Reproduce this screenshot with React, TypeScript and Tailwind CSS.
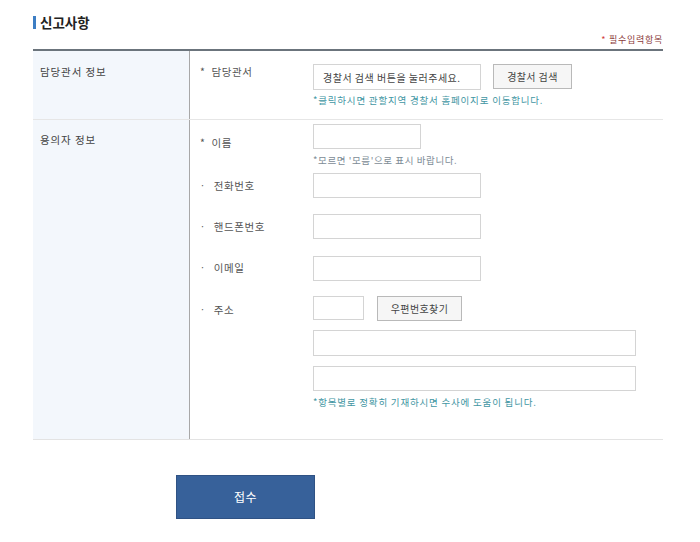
import React from "react";

const FieldLabel = ({ text, star, pt }: { text: string; star?: boolean; pt: string }) => (
  <div className={`w-[113px] shrink-0 text-[10.5px] leading-[14px] tracking-[0.6px] text-[#555] ${pt}`}>
    <span className={star ? "mr-[6px]" : "mr-[8px] text-[9px] relative -top-[1px]"}>{star ? "*" : "·"}</span>
    {text}
  </div>
);

const Input = ({ className }: { className: string }) => (
  <div className={`border border-[#d4d4d4] bg-white ${className}`} />
);

export default function App() {
  return (
    <div className="min-h-screen bg-white pl-[33px] pt-[14px] font-['Noto_Sans_CJK_KR',sans-serif]">
      <div className="w-[630px]">
        {/* Title */}
        <div className="flex items-center gap-[4px] h-[16px]">
          <div className="w-[3px] h-[13px] bg-[#3d7ec4]" />
          <h1 className="text-[13.5px] leading-[16px] font-semibold text-[#222]">신고사항</h1>
        </div>
        <p className="mt-[4px] mb-[3px] text-right text-[9px] leading-[12px] tracking-[0.7px] text-[#8b3a3a]">
          <span className="text-[#d23c3c] mr-[3px]">*</span>필수입력항목
        </p>

        {/* Table */}
        <div className="border-t-2 border-[#6b747c] border-b border-b-[#e3e3e3]">
          {/* Row 1 */}
          <div className="grid grid-cols-[157px_1fr] border-b border-[#e6e6e6]">
            <div className="bg-[#f3f7fc] border-r border-[#a8a8a8] pl-[7px] pt-[14px] text-[10.5px] leading-[14px] tracking-[0.9px] text-[#444]">
              담당관서 정보
            </div>
            <div className="pl-[10px] pt-[13px] pb-[12px]">
              <div className="flex">
                <FieldLabel text="담당관서" star pt="pt-[1px]" />
                <div>
                  <div className="flex items-start gap-[12px]">
                    <div className="w-[168px] h-[26px] border border-[#d4d4d4] flex items-center pl-[9px] text-[10px] tracking-[0.5px] text-[#444]">
                      경찰서 검색 버튼을 눌러주세요.
                    </div>
                    <button className="w-[79px] h-[25px] border border-[#b9b9b9] bg-[#f6f6f6] text-[10px] tracking-[0.4px] text-[#444]">
                      경찰서 검색
                    </button>
                  </div>
                  <p className="mt-[3px] text-[9.5px] leading-[14px] tracking-[0.8px] text-[#3f96a3]">
                    *클릭하시면 관할지역 경찰서 홈페이지로 이동합니다.
                  </p>
                </div>
              </div>
            </div>
          </div>

          {/* Row 2 */}
          <div className="grid grid-cols-[157px_1fr]">
            <div className="bg-[#f3f7fc] border-r border-[#a8a8a8] pl-[7px] pt-[13px] text-[10.5px] leading-[14px] tracking-[0.9px] text-[#444]">
              용의자 정보
            </div>
            <div className="pl-[10px] pt-[4px] pb-[30px]">
              <div className="flex">
                <FieldLabel text="이름" star pt="pt-[12px]" />
                <div>
                  <Input className="w-[108px] h-[25px]" />
                  <p className="mt-[4px] text-[9.5px] leading-[14px] tracking-[0.6px] text-[#7d8c96]">
                    *모르면 '모름'으로 표시 바랍니다.
                  </p>
                </div>
              </div>
              <div className="flex mt-[6px]">
                <FieldLabel text="전화번호" pt="pt-[6px]" />
                <Input className="w-[168px] h-[25px]" />
              </div>
              <div className="flex mt-[16px]">
                <FieldLabel text="핸드폰번호" pt="pt-[6px]" />
                <Input className="w-[168px] h-[25px]" />
              </div>
              <div className="flex mt-[17px]">
                <FieldLabel text="이메일" pt="pt-[5px]" />
                <Input className="w-[168px] h-[25px]" />
              </div>
              <div className="flex mt-[15px]">
                <FieldLabel text="주소" pt="pt-[7px]" />
                <div>
                  <div className="flex items-start gap-[13px]">
                    <Input className="w-[51px] h-[24px]" />
                    <button className="w-[85px] h-[25px] border border-[#b9b9b9] bg-[#f6f6f6] text-[10px] tracking-[0.4px] text-[#444]">
                      우편번호찾기
                    </button>
                  </div>
                  <Input className="mt-[9px] w-[323px] h-[26px]" />
                  <Input className="mt-[10px] w-[323px] h-[25px]" />
                  <p className="mt-[4px] text-[9.5px] leading-[14px] tracking-[0.8px] text-[#3f96a3]">
                    *항목별로 정확히 기재하시면 수사에 도움이 됩니다.
                  </p>
                </div>
              </div>
            </div>
          </div>
        </div>

        {/* Submit */}
        <button className="mt-[35px] ml-[143px] w-[139px] h-[44px] bg-[#37619a] border border-[#2f5284] text-white text-[12px] tracking-[0.5px]">
          접수
        </button>
      </div>
    </div>
  );
}
